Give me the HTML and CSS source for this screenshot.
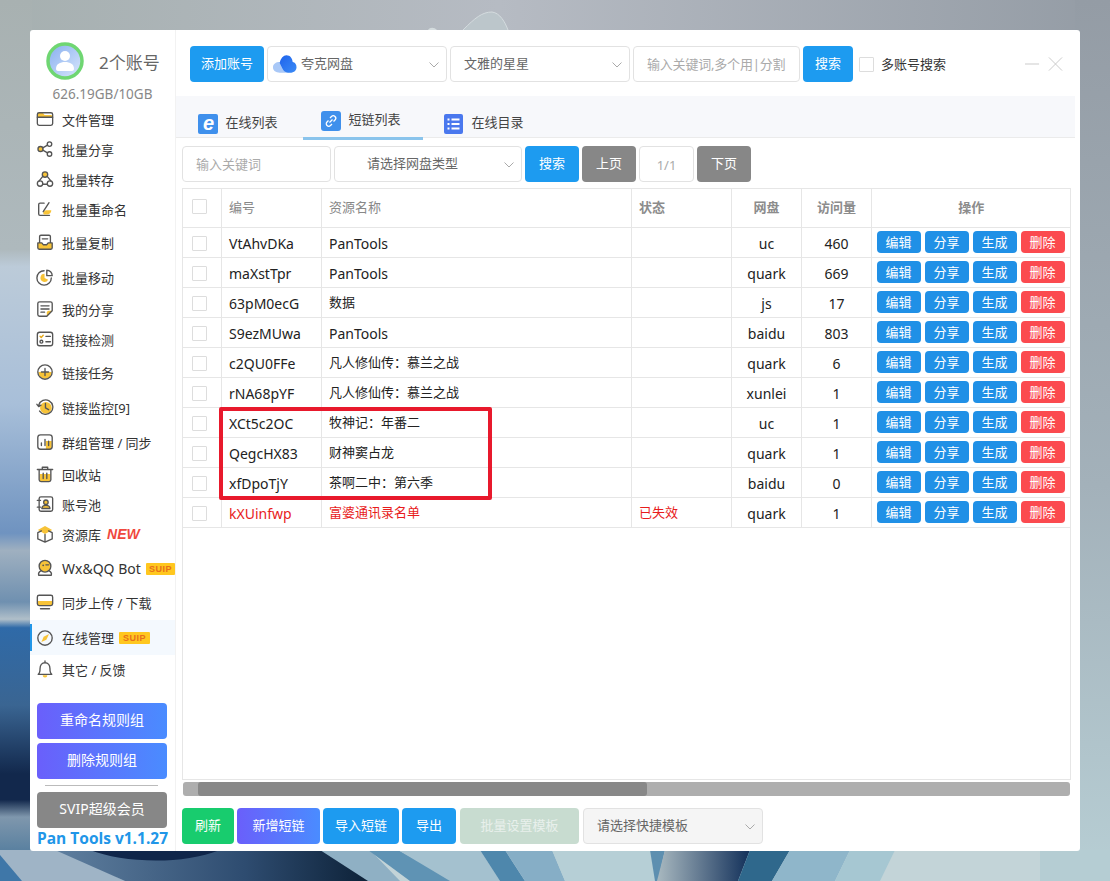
FILE: index.html
```html
<!DOCTYPE html>
<html lang="zh-CN">
<head>
	<meta charset="UTF-8">
	<title>Pan Tools</title>
	<link rel="stylesheet" href="styles.css">
</head>
<body>
	<!-- wallpaper -->
	<svg class="wallpaper" viewBox="0 0 1110 881" preserveAspectRatio="none">
		<defs>
			<linearGradient id="wpTop" x1="0" y1="0" x2="1" y2="0">
				<stop offset="0" stop-color="#a6b0b0"/><stop offset=".45" stop-color="#b6bbc3"/><stop offset="1" stop-color="#949ca5"/>
			</linearGradient>
			<linearGradient id="wpRight" x1="0" y1="0" x2="0" y2="1">
				<stop offset="0" stop-color="#949ca5"/><stop offset=".55" stop-color="#a3b1ba"/><stop offset="1" stop-color="#b7ced4"/>
			</linearGradient>
			<linearGradient id="wpLeft" x1="0" y1="0" x2="0" y2="1">
				<stop offset="0" stop-color="#a8b1b1"/><stop offset=".29" stop-color="#aeb9bd"/><stop offset=".31" stop-color="#bccbd9"/><stop offset=".47" stop-color="#a8bfd9"/><stop offset=".62" stop-color="#6f93c0"/><stop offset=".64" stop-color="#9fb0c0"/><stop offset=".7" stop-color="#6f90b0"/><stop offset=".72" stop-color="#b0bfc9"/><stop offset=".73" stop-color="#2f6aa8"/><stop offset=".82" stop-color="#3a6592"/><stop offset=".9" stop-color="#12284c"/><stop offset=".93" stop-color="#12284c"/><stop offset=".95" stop-color="#7f97ad"/><stop offset="1" stop-color="#4f7a9c"/>
			</linearGradient>
			<linearGradient id="wpWave" x1="0" y1="0" x2="1" y2="0">
				<stop offset="0" stop-color="#5f7f9f"/><stop offset=".6" stop-color="#2e4c70"/><stop offset="1" stop-color="#0c2036"/>
			</linearGradient>
			<linearGradient id="wpNavy" x1="0" y1="0" x2="1" y2="0">
				<stop offset="0" stop-color="#a9b9c0"/><stop offset="1" stop-color="#12305a"/>
			</linearGradient>
		</defs>
		<rect width="1110" height="881" fill="url(#wpTop)"/>
		<rect x="1075" width="35" height="881" fill="url(#wpRight)"/>
		<rect width="32" height="860" fill="url(#wpLeft)"/>
		<path d="M463 30 C475 18 482 12 492 12 C500 13 505 22 508 30Z" fill="#bcc6cb"/>
		<path d="M463 30 C475 18 482 12 492 12 C500 13 505 22 508 30" fill="none" stroke="#d5dcdf" stroke-width="1"/>
		<path d="M428 30 C430 27 434 27 437 30Z" fill="#d4dcde"/>
		<rect y="850" width="1110" height="31" fill="#c3d4d8"/>
		<polygon points="0,850 60,850 125,881 0,881" fill="#9fb4c6"/>
		<polygon points="0,855 22,881 0,881" fill="#3f77a8"/>
		<polygon points="55,850 370,850 372,881 125,881" fill="url(#wpWave)"/>
		<path d="M90 850 C120 862 180 866 220 850Z" fill="#10264a"/>
		<polygon points="320,850 370,850 400,881 368,881" fill="#8fb0c4"/>
		<polygon points="368,850 398,850 455,881 410,881" fill="#5f93b4"/>
		<polygon points="398,850 480,850 500,881 450,881" fill="#a4c1cf"/>
		<polygon points="480,850 505,850 525,881 500,881" fill="#4e87ac"/>
		<polygon points="505,850 552,850 565,881 525,881" fill="#86aec6"/>
		<polygon points="552,850 665,850 655,881 565,881" fill="#b6cfd6"/>
		<polygon points="650,850 665,850 658,881 655,881" fill="#5d8fb0"/>
		<polygon points="665,850 750,850 738,881 657,881" fill="url(#wpNavy)"/>
		<polygon points="750,850 790,850 772,881 738,881" fill="#2f688c"/>
		<polygon points="790,850 850,850 835,881 772,881" fill="#8fb6ca"/>
		<polygon points="850,850 895,850 880,881 835,881" fill="#a6c7d2"/>
		<rect x="1040" y="850" width="70" height="31" fill="#b5cdd3"/>
	</svg>

	<div class="window">
		<aside class="sidebar">
			<div class="account">
				<svg class="avatar" viewBox="0 0 40 40">
					<defs><linearGradient id="avBg" x1="0" y1="0" x2="1" y2="1"><stop offset="0" stop-color="#86aeef"/><stop offset="1" stop-color="#dbe8fc"/></linearGradient></defs>
					<circle cx="20" cy="20" r="17" fill="url(#avBg)" stroke="#6fd672" stroke-width="3.5"/>
					<circle cx="20" cy="15" r="5" fill="#fff"/>
					<path d="M11 28c0-5 4-7 9-7s9 2 9 7c0 1-1 2-2 2H13c-1 0-2-1-2-2z" fill="#fff"/>
				</svg>
				<span class="account-name">2个账号</span>
			</div>
			<div class="quota">626.19GB/10GB</div>

			<ul class="menu">
				<li>
					<svg class="ico" viewBox="0 0 20 20"><path class="yl" d="M2 8V4.500C2 3.700 2.700 3 3.500 3h4l2 2.500h7c.8 0 1.500.7 1.500 1.500v1z"/><rect class="ln" x="1.500" y="3" width="17" height="14" rx="2"/><path class="ln" d="M1.500 8h17"/></svg>
					文件管理
				</li>
				<li>
					<svg class="ico" viewBox="0 0 20 20"><circle class="yl ln" cx="5" cy="10" r="2.800"/><circle class="ln" cx="15" cy="4.500" r="2.500"/><circle class="ln" cx="15" cy="15.500" r="2.500"/><path class="ln" d="M7.500 8.700l5.300-3M7.500 11.300l5.300 3"/></svg>
					批量分享
				</li>
				<li>
					<svg class="ico" viewBox="0 0 20 20"><circle class="yl ln" cx="10" cy="5" r="3"/><circle class="ln" cx="4.500" cy="15" r="3"/><circle class="ln" cx="15.500" cy="15" r="3"/><path class="ln" d="M7.500 7L3.300 12.300M12.500 7l4.200 5.300M7.500 15.800h5"/></svg>
					批量转存
				</li>
				<li>
					<svg class="ico" viewBox="0 0 20 20"><path class="ln" d="M9 3.500H4.500c-1 0-1.500.6-1.500 1.500v10.500c0 1 .6 1.500 1.500 1.500H15"/><path class="yl" d="M8 15c0-2 1.500-3.500 3.500-3.500h5.500c0 3-2 4.500-4.500 4.500H9z"/><path class="ln" d="M8 13L14.500 3"/></svg>
					批量重命名
				</li>
				<li class="gap-3">
					<svg class="ico" viewBox="0 0 20 20"><path class="yl" d="M2 11h4.500l1.500 2h4l1.500-2H18v5.500c0 .8-.7 1.500-1.500 1.500h-13C2.700 18 2 17.300 2 16.500z"/><path class="ln" d="M4 10.500V4c0-1 .6-1.500 1.500-1.500h9c1 0 1.500.5 1.500 1.500v6.500M2 11v5.500C2 17.400 2.700 18 3.500 18h13c.8 0 1.500-.6 1.500-1.500V11h-4.500L12 13H8l-1.500-2zM7 6.500h6"/></svg>
					批量复制
				</li>
				<li class="gap-5">
					<svg class="ico" viewBox="0 0 20 20"><path class="ln" d="M9 3a8 8 0 1 0 8 8"/><path class="yl" d="M9.500 6.500a4.500 4.500 0 1 0 4 6.500l-4-2z"/><path class="ln" d="M12 2.500a6 6 0 0 1 6 6h-6z"/></svg>
					批量移动
				</li>
				<li class="gap-2">
					<svg class="ico" viewBox="0 0 20 20"><path class="yl" d="M12 18l6-6h-4c-1 0-2 1-2 2z"/><path class="ln" d="M12 18H4c-1 0-2-1-2-2V4c0-1 1-2 2-2h12c1 0 2 1 2 2v8zM5.500 6.500h9M5.500 10h9M5.500 13.500h4"/></svg>
					我的分享
				</li>
				<li>
					<svg class="ico" viewBox="0 0 20 20"><rect class="ln" x="1.500" y="2.500" width="17" height="15" rx="2.500"/><path class="ln lnY" d="M4.500 7l1.300 1.300L8 5.800"/><circle class="ln" cx="6" cy="13" r="1.600"/><path class="ln" d="M11 7h5M11 13h5"/></svg>
					链接检测
				</li>
				<li class="gap-3">
					<svg class="ico" viewBox="0 0 20 20"><path class="yl" d="M2.500 10h15a7.500 7.500 0 0 1-15 0z"/><circle class="ln" cx="10" cy="10" r="8"/><path class="ln" d="M6 10h8M10 6v8"/></svg>
					链接任务
				</li>
				<li class="gap-5">
					<svg class="ico" viewBox="0 0 20 20"><circle class="yl" cx="11" cy="11" r="6.500"/><path class="ln" d="M3 8a8 8 0 1 1 1 6.500M1 7l2 2.500L5.500 8M10.500 6v5l3.500 2"/></svg>
					链接监控[9]
				</li>
				<li class="gap-5">
					<svg class="ico" viewBox="0 0 20 20"><path class="yl" d="M11 18V9h6.500v7c0 1-.6 2-2 2z"/><rect class="ln" x="2" y="2" width="16" height="16" rx="3"/><path class="ln" d="M6 14v-3M10 14V7M14 14v-5"/></svg>
					群组管理 / 同步
				</li>
				<li class="gap-2">
					<svg class="ico" viewBox="0 0 20 20"><path class="yl" d="M4 10h12v6.500c0 1-.6 1.500-1.500 1.500h-9c-1 0-1.500-.5-1.500-1.500z"/><path class="ln" d="M1.500 5h17M7 5V2.500h6V5M3.500 5v11.500c0 1 .6 2 2 2h9c1.400 0 2-1 2-2V5M8 9v6M12 9v6"/></svg>
					回收站
				</li>
				<li>
					<svg class="ico" viewBox="0 0 20 20"><rect class="ln" x="3.500" y="2" width="15" height="16" rx="2"/><path class="ln" d="M1.500 6h3.500M1.500 13.500h3.500"/><circle class="yl ln" cx="11" cy="8" r="2.500"/><path class="yl ln" d="M6.500 15c0-2.500 2-3.500 4.500-3.500s4.500 1 4.500 3.500z"/></svg>
					账号池
				</li>
				<li>
					<svg class="ico" viewBox="0 0 20 20"><path class="yl" d="M10 1l8 4.500-8 4.500-8-4.500z"/><path class="ln" d="M2 8.500v7L10 19V10.500M18 8.500v7L10 19M2 8.500l4-2M18 8.500l-4-2"/></svg>
					资源库 <em class="tag-new">NEW</em>
				</li>
				<li class="gap-4">
					<svg class="ico" viewBox="0 0 20 20"><circle class="yl ln" cx="10" cy="8" r="6.500"/><path class="ln" d="M3 18c-1-3 1-4 3-5M17 18c1-3-1-4-3-5M3 18h14"/><circle cx="8" cy="7" r="1" fill="#555"/><path class="ln" d="M11 6.500h3"/></svg>
					<span class="latin">Wx&amp;QQ Bot</span> <span class="tag-suip">SUIP</span>
				</li>
				<li class="gap-4">
					<svg class="ico" viewBox="0 0 20 20"><path class="yl" d="M2 9h16v3.500c0 1-.6 1.500-1.500 1.500h-13c-1 0-1.500-.5-1.500-1.500z"/><rect class="ln" x="1.500" y="2.500" width="17" height="11.500" rx="2"/><path class="ln" d="M5 17.500h10"/></svg>
					同步上传 / 下载
				</li>
				<li class="gap-3 active">
					<svg class="ico" viewBox="0 0 20 20"><circle class="ln" cx="10" cy="10" r="8"/><path class="yl" d="M14.500 5.500L11.500 12 6 14.500 8.500 8.500z"/></svg>
					在线管理 <span class="tag-suip">SUIP</span>
				</li>
				<li class="short">
					<svg class="ico" viewBox="0 0 20 20"><path class="ln" d="M2.500 16c2-1.500 2-3 2-6.500 0-3.500 2-6.500 5.500-6.500s5.500 3 5.500 6.500c0 3.500 0 5 2 6.500zM10 1v2"/><path class="yl" d="M7.500 17h5c0 1.500-1 2.500-2.500 2.500s-2.500-1-2.500-2.500z"/></svg>
					其它 / 反馈
				</li>
			</ul>

			<div class="side-actions">
				<button type="button" class="btn btn-grad">重命名规则组</button>
				<button type="button" class="btn btn-grad">删除规则组</button>
				<hr class="side-line">
				<button type="button" class="btn btn-gray">SVIP超级会员</button>
				<div class="version">Pan Tools v1.1.27</div>
			</div>
		</aside>

		<main class="main">
			<div class="topbar">
				<button type="button" class="btn btn-blue w-add">添加账号</button>
				<div class="select w-select">
					<svg class="quark" viewBox="0 0 26 20">
						<defs><linearGradient id="qk" x1="0" y1="0" x2="1" y2="1"><stop offset="0" stop-color="#1f63ec"/><stop offset="1" stop-color="#3b8bf6"/></linearGradient></defs>
						<path d="M8 19c-4 0-7-2-7-5.500S4 8 8 8c5 0 7 4 9 11z" fill="#a9c8f7"/>
						<path d="M8 9c1-5 4-8 7-8 4 0 6 3 6.500 7 2.500.5 4 2.500 4 5.500s-2.500 5.500-5.500 5.500h-3c-3 0-5-1.500-6-4z" fill="url(#qk)"/>
					</svg>
					<span>夸克网盘</span>
					<svg class="chev" viewBox="0 0 10 6"><path d="M.5.500L5 5 9.500.500"/></svg>
				</div>
				<div class="select w-select pad">
					<span>文雅的星星</span>
					<svg class="chev" viewBox="0 0 10 6"><path d="M.5.500L5 5 9.500.500"/></svg>
				</div>
				<input class="field w-keys" type="text" placeholder="输入关键词,多个用|分割">
				<button type="button" class="btn btn-blue w-search">搜索</button>
				<label class="multi"><input class="chk" type="checkbox"><span>多账号搜索</span></label>
				<div class="win-ctrl">
					<svg viewBox="0 0 16 16"><path d="M0 8h15"/></svg>
					<svg viewBox="0 0 16 16"><path d="M1 1l14 14M15 1L1 15"/></svg>
				</div>
			</div>

			<div class="tabs">
				<div class="tab">
					<span class="tab-ie">e</span>
					在线列表
				</div>
				<div class="tab tab-on">
					<svg class="tab-ico" viewBox="0 0 20 20"><rect width="20" height="20" rx="3" fill="#3f90ec"/><path d="M8.500 11.500l3-3M9 7l1.500-1.500a2.400 2.400 0 0 1 3.500 3.500L12.500 10.500M11 13l-1.500 1.500A2.400 2.400 0 0 1 6 11l1.500-1.500" fill="none" stroke="#fff" stroke-width="1.300"/></svg>
					短链列表
				</div>
				<div class="tab tab-last">
					<svg class="tab-ico" viewBox="0 0 20 20"><rect width="19" height="20" rx="2" fill="#4a78ee"/><path d="M3.500 5.500h2M3.500 10h2M3.500 14.500h2M7.500 5.500h8M7.500 10h8M7.500 14.500h8" stroke="#fff" stroke-width="2"/></svg>
					在线目录
				</div>
			</div>

			<div class="filters">
				<input class="field w-kw" type="text" placeholder="输入关键词">
				<div class="select w-type centered">
					<span>请选择网盘类型</span>
					<svg class="chev" viewBox="0 0 10 6"><path d="M.5.500L5 5 9.500.500"/></svg>
				</div>
				<button type="button" class="btn btn-blue w-page">搜索</button>
				<button type="button" class="btn btn-gray w-page">上页</button>
				<div class="page-no">1/1</div>
				<button type="button" class="btn btn-gray w-page">下页</button>
			</div>

			<div class="table-box">
				<table class="list">
					<colgroup>
						<col class="c-chk"><col class="c-id"><col class="c-name"><col class="c-state"><col class="c-disk"><col class="c-num"><col>
					</colgroup>
					<thead>
						<tr>
							<th><input class="chk" type="checkbox"></th>
							<th>编号</th><th>资源名称</th><th class="strong">状态</th>
							<th class="mid strong">网盘</th><th class="mid strong">访问量</th><th class="mid strong last">操作</th>
						</tr>
					</thead>
					<tbody>
						<tr>
							<td><input class="chk" type="checkbox"></td><td>VtAhvDKa</td><td>PanTools</td><td></td><td class="mid">uc</td><td class="mid">460</td>
							<td class="ops"><button type="button">编辑</button><button type="button">分享</button><button type="button">生成</button><button type="button" class="del">删除</button></td>
						</tr>
						<tr>
							<td><input class="chk" type="checkbox"></td><td>maXstTpr</td><td>PanTools</td><td></td><td class="mid">quark</td><td class="mid">669</td>
							<td class="ops"><button type="button">编辑</button><button type="button">分享</button><button type="button">生成</button><button type="button" class="del">删除</button></td>
						</tr>
						<tr>
							<td><input class="chk" type="checkbox"></td><td>63pM0ecG</td><td class="cjk">数据</td><td></td><td class="mid">js</td><td class="mid">17</td>
							<td class="ops"><button type="button">编辑</button><button type="button">分享</button><button type="button">生成</button><button type="button" class="del">删除</button></td>
						</tr>
						<tr>
							<td><input class="chk" type="checkbox"></td><td>S9ezMUwa</td><td>PanTools</td><td></td><td class="mid">baidu</td><td class="mid">803</td>
							<td class="ops"><button type="button">编辑</button><button type="button">分享</button><button type="button">生成</button><button type="button" class="del">删除</button></td>
						</tr>
						<tr>
							<td><input class="chk" type="checkbox"></td><td>c2QU0FFe</td><td class="cjk">凡人修仙传：慕兰之战</td><td></td><td class="mid">quark</td><td class="mid">6</td>
							<td class="ops"><button type="button">编辑</button><button type="button">分享</button><button type="button">生成</button><button type="button" class="del">删除</button></td>
						</tr>
						<tr>
							<td><input class="chk" type="checkbox"></td><td>rNA68pYF</td><td class="cjk">凡人修仙传：慕兰之战</td><td></td><td class="mid">xunlei</td><td class="mid">1</td>
							<td class="ops"><button type="button">编辑</button><button type="button">分享</button><button type="button">生成</button><button type="button" class="del">删除</button></td>
						</tr>
						<tr>
							<td><input class="chk" type="checkbox"></td><td>XCt5c2OC</td><td class="cjk">牧神记：年番二</td><td></td><td class="mid">uc</td><td class="mid">1</td>
							<td class="ops"><button type="button">编辑</button><button type="button">分享</button><button type="button">生成</button><button type="button" class="del">删除</button></td>
						</tr>
						<tr>
							<td><input class="chk" type="checkbox"></td><td>QegcHX83</td><td class="cjk">财神窦占龙</td><td></td><td class="mid">quark</td><td class="mid">1</td>
							<td class="ops"><button type="button">编辑</button><button type="button">分享</button><button type="button">生成</button><button type="button" class="del">删除</button></td>
						</tr>
						<tr>
							<td><input class="chk" type="checkbox"></td><td>xfDpoTjY</td><td class="cjk">茶啊二中：第六季</td><td></td><td class="mid">baidu</td><td class="mid">0</td>
							<td class="ops"><button type="button">编辑</button><button type="button">分享</button><button type="button">生成</button><button type="button" class="del">删除</button></td>
						</tr>
						<tr class="bad">
							<td><input class="chk" type="checkbox"></td><td>kXUinfwp</td><td class="cjk">富婆通讯录名单</td><td class="cjk">已失效</td><td class="mid">quark</td><td class="mid">1</td>
							<td class="ops"><button type="button">编辑</button><button type="button">分享</button><button type="button">生成</button><button type="button" class="del">删除</button></td>
						</tr>
					</tbody>
				</table>
				<!-- red annotation box -->
				<div class="mark"></div>
			</div>

			<div class="scroll"><div class="scroll-thumb"></div></div>

			<div class="footer">
				<button type="button" class="btn btn-green w-refresh">刷新</button>
				<button type="button" class="btn btn-grad w-new">新增短链</button>
				<button type="button" class="btn btn-blue w-import">导入短链</button>
				<button type="button" class="btn btn-blue w-page">导出</button>
				<button type="button" class="btn btn-off w-batch">批量设置模板</button>
				<div class="select w-tpl pad">
					<span>请选择快捷模板</span>
					<svg class="chev" viewBox="0 0 10 6"><path d="M.5.500L5 5 9.500.500"/></svg>
				</div>
			</div>
		</main>
	</div>
</body>
</html>
```

FILE: styles.css
```css
* { box-sizing: border-box; }
html, body { margin: 0; height: 881px; overflow: hidden; }
body { position: relative; font-family: "Noto Sans", "Noto Sans CJK SC", sans-serif; font-size: 13px; color: #333; }

.wallpaper { position: absolute; top: 0; left: 0; width: 1110px; height: 881px; }

.window { position: absolute; top: 30px; left: 30px; width: 1050px; height: 821px; display: flex; background: #fff; border-radius: 3px; overflow: hidden; }

/* sidebar */
.sidebar { width: 146px; flex: none; border-right: 1px solid #f2f2f2; position: relative; }
.account { display: flex; align-items: center; padding: 11px 0 0 15px; height: 51px; }
.avatar { width: 40px; height: 40px; flex: none; }
.account-name { margin: 3px 0 0 14px; font-size: 17px; color: #666; line-height: 24px; }
.quota { text-align: center; margin-top: 3px; height: 21px; line-height: 21px; font-size: 13.500px; color: #888; }

.menu { list-style: none; margin: -1px 0 0; padding: 0; }
.menu li { position: relative; display: flex; align-items: center; height: 30px; padding-left: 6px; white-space: nowrap; font-size: 13px; color: #333; }
.menu .gap-2 { margin-top: 2px; }
.menu .gap-3 { margin-top: 3px; }
.menu .gap-4 { margin-top: 4px; }
.menu .gap-5 { margin-top: 5px; }
.menu .short { height: 28px; margin-top: 0; }
.menu .active { height: 35px; background: #f4f9fe; }
.menu .active::before { content: ""; position: absolute; left: 0; top: 4px; width: 2px; height: 27px; background: #2196e8; }
.latin { font-size: 14px; }
.ico { width: 18px; height: 18px; flex: none; margin-right: 8px; }
.ln { fill: none; stroke: #555; stroke-width: 1.5; stroke-linecap: round; stroke-linejoin: round; }
.yl { fill: #f7c338; }
.yl.ln { fill: #f7c338; }
.lnY { stroke: #e6a817; }
.tag-new { margin-left: 6px; font: italic bold 14px "Liberation Sans", sans-serif; color: #f0483e; }
.tag-suip { margin: 1px 0 0 5px; width: 31px; height: 12px; text-align: center; background: #ffc71f; border-radius: 1px; font: bold 9px/12px "Liberation Sans", sans-serif; letter-spacing: .5px; color: #e8701a; }

.side-actions { position: absolute; left: 7px; top: 673px; width: 130px; display: flex; flex-direction: column; gap: 4px; }
.side-actions .btn { width: 130px; font-size: 14px; }
.side-line { width: 113px; margin: 2px 0 2px 8px; border: 0; border-top: 1px solid #bbb; }
.version { margin-top: -4px; text-align: center; white-space: nowrap; font: bold 15.500px/20px "Open Sans", sans-serif; color: #2196e8; }

/* buttons */
.btn { height: 36px; padding: 0 0 4px; border: 0; border-radius: 4px; font-family: inherit; font-size: 13px; color: #fff; white-space: nowrap; }
.btn-blue { background: #1d9bf0; }
.btn-gray { background: #878787; }
.btn-green { background: #18cc6e; }
.btn-grad { background: linear-gradient(90deg, #6a5ffb, #4a8cff); }
.btn-off { background: #c8dcd0; color: #e8f0ec; }

/* form */
.field { height: 36px; padding: 0 0 0 13px; border: 1px solid #e2e2e2; border-radius: 4px; font-family: inherit; font-size: 13px; color: #333; background: #fff; outline: none; }
.field::placeholder { color: #aaa; opacity: 1; }
.select { position: relative; display: flex; align-items: center; height: 36px; border: 1px solid #e2e2e2; border-radius: 4px; color: #666; background: #fff; font-size: 13px; }
.select span { margin-bottom: 3px; }
.select.pad { padding-left: 13px; }
.select.centered { padding-left: 32px; }
.chev { position: absolute; right: 7px; top: 15px; width: 10px; height: 6px; fill: none; stroke: #aaa; stroke-width: 1; }
.quark { width: 25px; height: 20px; margin: 0 4px 0 4px; }
.chk { appearance: none; display: block; width: 15px; height: 15px; margin: 0; border: 1px solid #ddd; border-radius: 1px; background: #fff; }

/* top bar */
.main { flex: 1; min-width: 0; display: flex; flex-direction: column; }
.topbar { display: flex; align-items: center; gap: 3px; height: 36px; margin: 16px 0 14px 14px; padding-right: 17px; }
.w-add { width: 74px; }
.w-select { width: 180px; }
.w-keys { width: 167px; letter-spacing: -.2px; }
.w-search { width: 50px; }
.multi { display: flex; align-items: center; gap: 7px; margin-left: 3px; color: #333; font-size: 13px; white-space: nowrap; }
.multi span { margin-bottom: 2px; }
.win-ctrl { display: flex; gap: 8px; margin-left: auto; }
.win-ctrl svg { width: 15px; height: 16px; fill: none; stroke: #c8c8c8; stroke-width: 1; }

/* tabs */
.tabs { display: flex; height: 42px; margin-right: 5px; background: #f7f8fb; border-bottom: 1px solid #ebebeb; padding-left: 2px; }
.tab { display: flex; align-items: flex-start; justify-content: center; gap: 7px; width: 120px; height: 44px; padding-top: 18px; line-height: 17px; color: #444; flex: none; }
.tab-on { margin-left: 5px; padding-top: 15px; border-bottom: 3px solid #8ac4ec; padding-right: 4px; }
.tab-last { margin-left: 1px; }
.tab-ico { width: 20px; height: 20px; flex: none; }
.tab-ie { width: 20px; height: 20px; flex: none; text-align: center; background: #3f90ec; border-radius: 2px; font: italic bold 20px/18px "Liberation Sans", sans-serif; color: #fff; }

/* filters */
.filters { display: flex; gap: 3px; height: 36px; margin: 8px 0 6px 6px; }
.w-kw { width: 149px; }
.w-type { width: 188px; }
.w-page { width: 54px; }
.page-no { width: 55px; height: 36px; line-height: 36px; text-align: center; border: 1px solid #e2e2e2; border-radius: 4px; color: #aaa; font-size: 13px; }

/* table */
.table-box { position: relative; width: 889px; height: 592px; margin-left: 6px; border: 1px solid #e6e6e6; }
.list { width: 100%; border-collapse: collapse; table-layout: fixed; }
.c-chk { width: 38px; }
.c-id { width: 100px; }
.c-name { width: 310px; }
.c-state { width: 100px; }
.c-disk { width: 70px; }
.c-num { width: 70px; }
.list th, .list td { padding: 0 0 0 7.500px; border: 1px solid #e6e6e6; text-align: left; white-space: nowrap; overflow: hidden; }
.list tr > :first-child { border-left: 0; padding-left: 9px; }
.list tr > :last-child { border-right: 0; }
.list thead th { border-top: 0; height: 38px; padding-bottom: 3px; font-weight: 400; font-size: 13px; color: #888; }
.list thead .strong { font-weight: 700; color: #8c8c8c; }
.list thead .mid { padding-left: 1px; }
.list thead .last { padding-left: 3px; }
.list tbody td { height: 30px; padding-top: 2px; font-size: 14px; color: #222; }
.list tbody .cjk { font-size: 13px; padding-top: 0; padding-bottom: 2px; }
.list tr > .mid { text-align: center; padding-left: 1px; }
.list .ops { padding: 0 0 0 5px; font-size: 0; }
.ops button { width: 44px; height: 22px; margin-right: 4px; padding: 0; border: 0; border-radius: 4px; background: #2090e6; font-family: inherit; font-size: 13px; line-height: 20px; color: #fff; }
.ops .del { background: #fb4a4f; margin-right: 0; }
.list .bad td { color: #e81c1c; }
.list .bad td.mid { color: #222; }
.mark { position: absolute; left: 36px; top: 218px; width: 273px; height: 93px; border: 4px solid #e8192c; border-radius: 2px; }

/* scrollbar + footer */
.scroll { width: 887px; height: 14px; margin: 2px 0 0 7px; padding-left: 15px; background: #aeaeae; border-radius: 3px; }
.scroll-thumb { width: 449px; height: 14px; background: #888; border-radius: 3px; }
.footer { display: flex; gap: 3px; margin: 12px 0 0 6px; }
.w-refresh { width: 52px; }
.w-new { width: 83px; }
.w-import { width: 76px; }
.w-batch { width: 119px; margin-left: 1px; }
.w-tpl { width: 180px; margin-left: 1px; background: #f5f5f5; }
```
